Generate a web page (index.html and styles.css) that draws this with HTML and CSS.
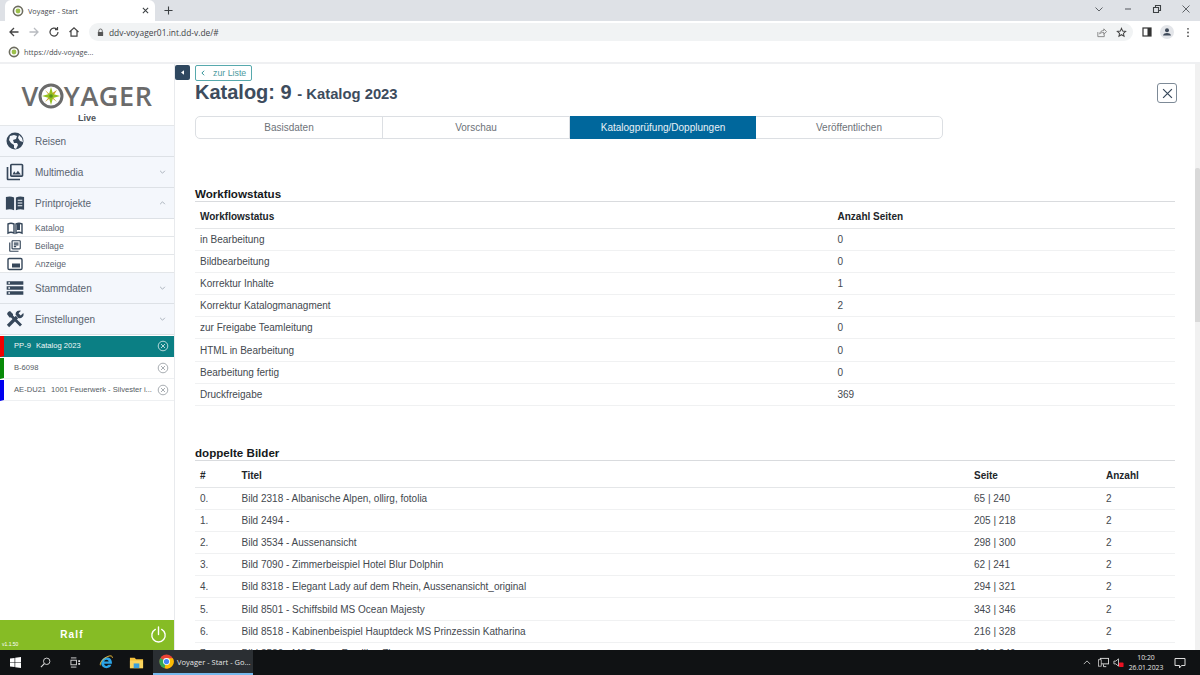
FILE: index.html
```html
<!DOCTYPE html>
<html lang="de">
<head>
<meta charset="utf-8">
<title>Voyager - Start</title>
<link rel="stylesheet" href="styles.css">
</head>
<body>
<header class="chrome">
  <div class="tabstrip">
    <div class="tab">
      <svg class="fav" viewBox="0 0 12 12"><circle cx="6" cy="6" r="4.6" fill="#fff" stroke="#6d6d5f" stroke-width="1.6"/><circle cx="6" cy="6" r="2.4" fill="#9cc04a"/></svg>
      <span class="tab-title">Voyager - Start</span>
      <svg class="tab-x" viewBox="0 0 8 8"><path d="M1 1l6 6M7 1L1 7" stroke="#3c4043" stroke-width="1.2"/></svg>
    </div>
    <svg class="tab-new" viewBox="0 0 10 10"><path d="M5 .5v9M.5 5h9" stroke="#3c4043" stroke-width="1.2"/></svg>
    <div class="win-ctrls">
      <svg viewBox="0 0 10 10"><path d="M1.5 3.5L5 7l3.500-3.500" fill="none" stroke="#5f6368"/></svg>
      <svg viewBox="0 0 10 10"><path d="M2 5h6" stroke="#5f6368" stroke-width="1.1"/></svg>
      <svg viewBox="0 0 10 10"><path d="M1.5 3.5h5v5h-5zM3.500 3.500v-2h5v5h-2" fill="none" stroke="#3c4043" stroke-width="1.1"/></svg>
      <svg viewBox="0 0 10 10"><path d="M1.5 1.5l7 7M8.5 1.5l-7 7" stroke="#5f6368" stroke-width="1"/></svg>
    </div>
  </div>
  <div class="toolbar">
    <svg class="nav" viewBox="0 0 12 12"><path d="M10.5 6H2M6 2L2 6l4 4" fill="none" stroke="#444" stroke-width="1.3"/></svg>
    <svg class="nav" viewBox="0 0 12 12"><path d="M1.5 6H10M6 2l4 4-4 4" fill="none" stroke="#b8bbc0" stroke-width="1.3"/></svg>
    <svg class="nav" viewBox="0 0 12 12"><path d="M10 6a4 4 0 1 1-1.2-2.8M9.5 1v2.6H7" fill="none" stroke="#444" stroke-width="1.2"/></svg>
    <svg class="nav" viewBox="0 0 12 12"><path d="M1.5 6L6 1.8 10.5 6M3 5v5.2h6V5" fill="none" stroke="#444" stroke-width="1.2"/></svg>
    <div class="omnibox">
      <svg class="lock" viewBox="0 0 8 10"><path d="M2 4.5V3a2 2 0 0 1 4 0v1.500" fill="none" stroke="#555"/><rect x="1" y="4.500" width="6" height="4.500" rx=".6" fill="#555"/></svg>
      <span class="url">ddv-voyager01.int.dd-v.de/#</span>
      <svg class="omni-ic" viewBox="0 0 12 12"><path d="M2 5.500v5h7V8M4 7.500c.4-2.500 2-3.600 4.500-3.600V2l3 3-3 3V6C6.500 6 5 6.300 4 7.500z" fill="none" stroke="#777" stroke-width=".9"/></svg>
      <svg class="omni-ic" viewBox="0 0 12 12"><path d="M6 1.500l1.300 3 3.200.3-2.400 2.100.7 3.200L6 8.400l-2.800 1.700.7-3.200L1.500 4.800l3.200-.3z" fill="none" stroke="#444" stroke-width="1.100"/></svg>
    </div>
    <svg class="side-ic" viewBox="0 0 10 10"><rect x="1" y="1" width="8" height="8" fill="#fff" stroke="#333" stroke-width="1.2"/><rect x="5.500" y="1" width="3.500" height="8" fill="#333"/></svg>
    <svg class="profile" viewBox="0 0 14 14"><circle cx="7" cy="7" r="7" fill="#e3e5e9"/><circle cx="7" cy="5.200" r="2" fill="#3f4a5a"/><path d="M3 10.500c.5-2 2.200-2.600 4-2.600s3.500.6 4 2.600z" fill="#3f4a5a"/></svg>
    <svg class="dots" viewBox="0 0 4 12"><circle cx="2" cy="2" r="1" fill="#555"/><circle cx="2" cy="6" r="1" fill="#555"/><circle cx="2" cy="10" r="1" fill="#555"/></svg>
  </div>
  <div class="bookmarks">
    <svg class="fav" viewBox="0 0 12 12"><circle cx="6" cy="6" r="4.600" fill="#fff" stroke="#6d6d5f" stroke-width="1.600"/><circle cx="6" cy="6" r="2.400" fill="#9cc04a"/></svg>
    <span class="bm-title">https://ddv-voyage...</span>
  </div>
</header>

<div class="app">
  <aside class="sidebar">
    <div class="brand">
      <div class="logo">
        <span>V</span>
        <svg class="compass" viewBox="0 0 26 26">
          <circle cx="13" cy="13" r="11" fill="#fff" stroke="#6b6b6b" stroke-width="3"/>
          <path d="M7 7l5 4.500 7-4.500-4.500 7 4.500 5-6-4.500L7 19l4.500-6z" fill="#c9a227"/>
          <path d="M13 4l2 7 7 2-7 2-2 7-2-7-7-2 7-2z" fill="#95c11f"/>
          <circle cx="13" cy="13" r="1.800" fill="#5a8f1e"/>
        </svg>
        <span>YAGER</span>
      </div>
      <div class="brand-sub">Live</div>
    </div>
    <nav>
      <a class="menu">
        <svg class="m-ic" viewBox="0 0 20 20"><circle cx="10" cy="10" r="8.500" fill="#36475a"/><path d="M5 5l4-1 3 1-1 3-3 1 1 3 3 0 1 2-2 4-2-1 0-3-3-2-2-3zM14 4l3 3 1 4-3-1-2-3z" fill="#f4f7fc"/></svg>
        <span class="m-label">Reisen</span>
      </a>
      <a class="menu">
        <svg class="m-ic" viewBox="0 0 24 24"><path d="M22 16V4c0-1.100-.9-2-2-2H8c-1.100 0-2 .9-2 2v12c0 1.100.9 2 2 2h12c1.100 0 2-.9 2-2zM20 16H8V4h12zM11 11l2 2.700 2.500-3.200L19 15H9zM2 6v14c0 1.100.9 2 2 2h14v-2H4V6H2z" fill="#36475a"/></svg>
        <span class="m-label">Multimedia</span>
        <svg class="caret" viewBox="0 0 8 5"><path d="M1 1l3 3 3-3" fill="none" stroke="#9aa3ad"/></svg>
      </a>
      <a class="menu">
        <svg class="m-ic" viewBox="0 0 22 20"><path d="M1 3.500c3-1 6-1 9 .5v14c-3-1.500-6-1.500-9-.5zM12 4c3-1.500 6-1.500 9-.5v14c-3-1-6-1-9 .5z" fill="#36475a"/><path d="M14 7h5M14 10h5M14 13h5" stroke="#f4f7fc" stroke-width="1.200"/></svg>
        <span class="m-label">Printprojekte</span>
        <svg class="caret" viewBox="0 0 8 5"><path d="M1 4l3-3 3 3" fill="none" stroke="#9aa3ad"/></svg>
      </a>
      <a class="sub">
        <svg class="s-ic" viewBox="0 0 16 14"><path d="M1 3c2-1 4-1 6 0v9c-2-1-4-1-6 0zM9 3c2-1 4-1 6 0v9c-2-1-4-1-6 0z" fill="none" stroke="#36475a" stroke-width="1.400"/><path d="M10 2h3v7h-3z" fill="#36475a"/></svg>
        <span>Katalog</span>
      </a>
      <a class="sub">
        <svg class="s-ic" viewBox="0 0 24 24"><path d="M4 6H2v14c0 1.100.9 2 2 2h14v-2H4V6zm16-4H8c-1.100 0-2 .9-2 2v12c0 1.100.9 2 2 2h12c1.100 0 2-.9 2-2V4c0-1.100-.9-2-2-2zm0 14H8V4h12v12zM10 9h8v2h-8zm0 3h4v2h-4zm0-6h8v2h-8z" fill="#36475a"/></svg>
        <span>Beilage</span>
      </a>
      <a class="sub">
        <svg class="s-ic" viewBox="0 0 16 14"><rect x="1" y="1.500" width="14" height="11" rx="1.200" fill="none" stroke="#36475a" stroke-width="1.400"/><rect x="5" y="6.500" width="8" height="4" fill="#36475a"/></svg>
        <span>Anzeige</span>
      </a>
      <a class="menu">
        <svg class="m-ic" viewBox="0 0 24 24"><path d="M2 20h20v-4H2v4zm2-3h2v2H4v-2zM2 4v4h20V4H2zm4 3H4V5h2v2zm-4 7h20v-4H2v4zm2-3h2v2H4v-2z" fill="#36475a"/></svg>
        <span class="m-label">Stammdaten</span>
        <svg class="caret" viewBox="0 0 8 5"><path d="M1 1l3 3 3-3" fill="none" stroke="#9aa3ad"/></svg>
      </a>
      <a class="menu">
        <svg class="m-ic" viewBox="0 0 20 20"><path d="M3 17L12 8" stroke="#36475a" stroke-width="3.200"/><path d="M10.500 5.500a4 4 0 0 1 5.500-3.800L13.500 4.200l2.200 2.200 2.600-2.500a4 4 0 0 1-5 5.200z" fill="#36475a"/><path d="M3 3l2-1 3 3 0 1.500 9 9-2 2-9-9H4.500L2 5z" fill="#36475a"/></svg>
        <span class="m-label">Einstellungen</span>
        <svg class="caret" viewBox="0 0 8 5"><path d="M1 1l3 3 3-3" fill="none" stroke="#9aa3ad"/></svg>
      </a>
    </nav>
    <div class="open-list">
      <div class="open-item active red">
        <span class="oi-id">PP-9</span><span class="oi-name">Katalog 2023</span>
        <svg class="oi-x" viewBox="0 0 12 12"><circle cx="6" cy="6" r="4.800" fill="none" stroke="currentColor"/><path d="M4 4l4 4M8 4l-4 4" stroke="currentColor"/></svg>
      </div>
      <div class="open-item green">
        <span class="oi-id">B-6098</span><span class="oi-name"></span>
        <svg class="oi-x" viewBox="0 0 12 12"><circle cx="6" cy="6" r="4.800" fill="none" stroke="currentColor"/><path d="M4 4l4 4M8 4l-4 4" stroke="currentColor"/></svg>
      </div>
      <div class="open-item blue">
        <span class="oi-id">AE-DU21</span><span class="oi-name">1001 Feuerwerk - Silvester i...</span>
        <svg class="oi-x" viewBox="0 0 12 12"><circle cx="6" cy="6" r="4.800" fill="none" stroke="currentColor"/><path d="M4 4l4 4M8 4l-4 4" stroke="currentColor"/></svg>
      </div>
    </div>
    <div class="user-bar">
      <span class="version">v1.1.50</span>
      <span class="user-name">Ralf</span>
      <svg class="power" viewBox="0 0 16 16"><path d="M5 3.200a6.300 6.300 0 1 0 6 0M8 1v7" fill="none" stroke="#fff" stroke-width="1.300" stroke-linecap="round"/></svg>
    </div>
  </aside>

  <main class="main">
    <button class="collapse" type="button"><svg viewBox="0 0 4 6"><path d="M4 0v6L0 3z" fill="#fff"/></svg></button>
    <button class="close" type="button"><svg viewBox="0 0 10 10"><path d="M1 1l8 8M9 1l-8 8" stroke="#36475a" stroke-width="1.100"/></svg></button>
    <div class="content">
      <a class="back"><svg viewBox="0 0 5 8"><path d="M4 1L1 4l3 3" fill="none" stroke="#17858b" stroke-width="1.200"/></svg><span>zur Liste</span></a>
      <h1 class="title">Katalog: 9 <small>- Katalog 2023</small></h1>
      <div class="tabs">
        <a class="tabs-item">Basisdaten</a>
        <a class="tabs-item">Vorschau</a>
        <a class="tabs-item selected">Katalogprüfung/Dopplungen</a>
        <a class="tabs-item">Veröffentlichen</a>
      </div>
      <section class="block first">
        <h2 class="block-title">Workflowstatus</h2>
        <table class="grid wf">
          <thead><tr><th>Workflowstatus</th><th>Anzahl Seiten</th></tr></thead>
          <tbody>
            <tr><td>in Bearbeitung</td><td>0</td></tr>
            <tr><td>Bildbearbeitung</td><td>0</td></tr>
            <tr><td>Korrektur Inhalte</td><td>1</td></tr>
            <tr><td>Korrektur Katalogmanagment</td><td>2</td></tr>
            <tr><td>zur Freigabe Teamleitung</td><td>0</td></tr>
            <tr><td>HTML in Bearbeitung</td><td>0</td></tr>
            <tr><td>Bearbeitung fertig</td><td>0</td></tr>
            <tr><td>Druckfreigabe</td><td>369</td></tr>
          </tbody>
        </table>
      </section>
      <section class="block second">
        <h2 class="block-title">doppelte Bilder</h2>
        <table class="grid dup">
          <thead><tr><th>#</th><th>Titel</th><th>Seite</th><th>Anzahl</th></tr></thead>
          <tbody>
            <tr><td>0.</td><td>Bild 2318 - Albanische Alpen, ollirg, fotolia</td><td>65 | 240</td><td>2</td></tr>
            <tr><td>1.</td><td>Bild 2494 -</td><td>205 | 218</td><td>2</td></tr>
            <tr><td>2.</td><td>Bild 3534 - Aussenansicht</td><td>298 | 300</td><td>2</td></tr>
            <tr><td>3.</td><td>Bild 7090 - Zimmerbeispiel Hotel Blur Dolphin</td><td>62 | 241</td><td>2</td></tr>
            <tr><td>4.</td><td>Bild 8318 - Elegant Lady auf dem Rhein, Aussenansicht_original</td><td>294 | 321</td><td>2</td></tr>
            <tr><td>5.</td><td>Bild 8501 - Schiffsbild MS Ocean Majesty</td><td>343 | 346</td><td>2</td></tr>
            <tr><td>6.</td><td>Bild 8518 - Kabinenbeispiel Hauptdeck MS Prinzessin Katharina</td><td>216 | 328</td><td>2</td></tr>
            <tr><td>7.</td><td>Bild 8530 - MS Bonne Familien Zimmer</td><td>221 | 249</td><td>2</td></tr>
          </tbody>
        </table>
      </section>
    </div>
    <div class="scrollbar"><div class="thumb"></div></div>
  </main>
</div>

<footer class="taskbar">
  <svg class="tb-win" viewBox="0 0 12 12"><path d="M0 1.700l5-.7v4.600H0zM5.700.9L12 0v5.600H5.700zM0 6.300h5V11l-5-.7zM5.700 6.300H12V12l-6.300-.9z" fill="#fff"/></svg>
  <svg class="tb-ic" viewBox="0 0 12 12"><circle cx="7.300" cy="4.700" r="3.500" fill="none" stroke="#ddd" stroke-width="1"/><path d="M4.700 7.300L1 11" stroke="#ddd" stroke-width="1.200"/></svg>
  <svg class="tb-ic" viewBox="0 0 12 12"><path d="M1 1h6M1 11h6" stroke="#ddd"/><rect x="1" y="3.500" width="6" height="5" fill="none" stroke="#ddd"/><rect x="9" y="3.500" width="2" height="2" fill="#ddd"/><rect x="9" y="6.500" width="2" height="2" fill="#ddd"/></svg>
  <svg class="tb-app" viewBox="0 0 16 16"><path d="M8 2.500a5.700 5.700 0 0 0-5.700 6c0 3.300 2.600 5.500 5.700 5.500 2.500 0 4.400-1.300 5.200-3.500H10c-.5.800-1.200 1.100-2 1.100-1.400 0-2.500-1-2.500-2.300h8.300c.4-3.800-2-6.800-5.800-6.800zM5.600 7c.2-1.100 1.200-1.900 2.400-1.900s2.100.8 2.300 1.900z" fill="#2ba4e6"/><path d="M1.500 11c-1-2.800 3-7.500 8-9.500 3-1.200 5-.5 4.800 1.500" fill="none" stroke="#f3c23c" stroke-width="1"/></svg>
  <svg class="tb-app" viewBox="0 0 16 16"><path d="M1 3h5l1.500 1.500H15V14H1z" fill="#f6c33c"/><rect x="1" y="6" width="14" height="8" fill="#fbd55e"/><rect x="5" y="9" width="6" height="5" fill="#3aa0dc"/></svg>
  <div class="tb-active">
    <svg class="tb-chrome" viewBox="0 0 16 16"><circle cx="8" cy="8" r="7.500" fill="#e94335"/><path d="M8 8L1.500 4.200A7.500 7.500 0 0 0 6 15.300z" fill="#34a853"/><path d="M8 4.500h6.800A7.500 7.500 0 0 1 6 15.300z" fill="#fbbc05"/><circle cx="8" cy="8" r="3.700" fill="#fff"/><circle cx="8" cy="8" r="2.800" fill="#4285f4"/></svg>
    <span>Voyager - Start - Go...</span>
  </div>
  <div class="tray">
    <svg class="tr-up" viewBox="0 0 10 6"><path d="M1 5l4-4 4 4" fill="none" stroke="#ddd"/></svg>
    <svg class="tr-net" viewBox="0 0 12 12"><rect x="2.500" y="1.500" width="9" height="6" fill="none" stroke="#ddd"/><rect x=".5" y="3" width="3" height="7" fill="#111" stroke="#ddd" stroke-width=".8"/><path d="M6 8v2.500h3" stroke="#ddd" fill="none"/></svg>
    <svg class="tr-vol" viewBox="0 0 12 12"><path d="M1 4.500h2L6 2v8L3 7.500H1z" fill="none" stroke="#ddd" stroke-width=".9"/><rect x="6.500" y="6" width="5" height="5" rx="1" fill="#e81123"/></svg>
    <div class="clock"><span>10:20</span><span>26.01.2023</span></div>
    <svg class="tr-msg" viewBox="0 0 12 12"><path d="M1 1.500h10v7H7.500L5.500 11V8.500H1z" fill="none" stroke="#ddd"/></svg>
  </div>
</footer>
</body>
</html>
```
FILE: styles.css
```css
* { box-sizing: border-box; }
html, body { margin: 0; height: 100%; }
body {
  width: 1200px;
  height: 675px;
  overflow: hidden;
  display: flex;
  flex-direction: column;
  font-family: "Liberation Sans", Arial, sans-serif;
  font-size: 10px;
  color: #44494f;
  background: #fff;
}
svg { display: block; flex: none; }

/* Browser chrome */
.chrome { flex: none; border-bottom: 2px solid #eff0f2; font-family: "Open Sans", "Noto Sans", sans-serif; }
.tabstrip { height: 21px; background: #dee1e6; display: flex; align-items: flex-end; padding-left: 5px; }
.tab {
  width: 150px; height: 21px; background: #fff; border-radius: 6px 6px 0 0;
  display: flex; align-items: center; padding: 0 5px 0 7px;
}
.fav { width: 12px; height: 12px; }
.tab-title { margin-left: 4px; flex: 1; font-size: 7.3px; color: #45494e; white-space: nowrap; }
.tab-x { width: 7px; height: 7px; margin-right: 1px; }
.tab-new { width: 9px; height: 9px; margin: 0 0 6px 9px; }
.win-ctrls { margin-left: auto; height: 21px; display: flex; align-items: flex-start; padding: 4px 9px 0 0; gap: 19px; }
.win-ctrls svg { width: 10px; height: 10px; }
.toolbar { height: 22px; display: flex; align-items: center; padding: 0 9px 0 8px; background: #fff; }
.nav { width: 12px; height: 12px; margin-right: 8px; }
.omnibox {
  margin-left: 1px; width: 1044px; height: 18px; border-radius: 9px; background: #f1f3f4;
  display: flex; align-items: center; padding: 0 6px 0 8px;
}
.lock { width: 7px; height: 9px; }
.url { margin-left: 5px; flex: 1; font-size: 8.4px; color: #3f4347; }
.omni-ic { width: 11px; height: 11px; margin-left: 9px; }
.side-ic { width: 10px; height: 10px; margin-left: 9px; }
.profile { width: 14px; height: 14px; margin-left: 8px; }
.dots { width: 4px; height: 11px; margin-left: 12px; }
.bookmarks { height: 19px; display: flex; align-items: center; padding: 0 0 1px 8px; background: #fff; }
.bm-title { margin-left: 4px; font-size: 7.3px; color: #4b4f54; }

/* App frame */
.app { flex: 1; min-height: 0; display: flex; }
.sidebar { width: 175px; flex: none; display: flex; flex-direction: column; border-right: 1px solid #e8eaed; background: #fff; }
.brand { height: 62px; flex: none; padding-top: 18px; border-bottom: 1px solid #e4e7ea; }
.logo {
  display: flex; justify-content: center; align-items: center; height: 27px;
  font-family: "Open Sans", sans-serif; font-size: 27px; font-weight: 600; color: #6b6b6b; line-height: 27px; letter-spacing: .6px;
}
.compass { width: 26px; height: 26px; margin: 0 0 0 -1px; }
.brand-sub { margin-top: 4px; text-align: center; font-size: 9px; font-weight: bold; color: #4d5359; line-height: 11px; }
.menu {
  display: flex; align-items: center; height: 31px; background: #f4f7fc; border-bottom: 1px solid #dde1e6;
  padding: 0 8px 0 5px; font-size: 10px; color: #5a6470;
}
.m-ic { width: 20px; height: 20px; }
.m-label { margin-left: 10px; flex: 1; }
.caret { width: 7px; height: 4px; }
.sub {
  display: flex; align-items: center; height: 18px; background: #fff; border-bottom: 1px solid #e3e6e9;
  padding-left: 7px; font-size: 8.6px; color: #5a6470;
}
.s-ic { width: 16px; height: 14px; }
.sub span { margin-left: 12px; }
.open-list { margin-top: 1px; }
.open-item {
  height: 21px; margin-bottom: 1px; display: flex; align-items: center; padding: 0 5px 1px 10px;
  font-size: 7.6px; color: #555c63; border-left: 4px solid; background: #fff; border-bottom: 1px solid #eef0f2;
}
.open-item.red { border-left-color: #f00000; }
.open-item.green { border-left-color: #078a07; }
.open-item.blue { border-left-color: #0000f0; }
.open-item.active { background: #0b7f84; color: #f0f8f8; border-bottom-color: #0b7f84; }
.oi-id { margin-right: 5px; }
.oi-name { flex: 1; min-width: 0; white-space: nowrap; overflow: hidden; }
.oi-x { width: 12px; height: 12px; color: #a8adb2; }
.active .oi-x { color: #b7d9db; }
.user-bar {
  margin-top: auto; height: 30px; background: #86bc25; display: flex; align-items: center; justify-content: center;
  position: relative; color: #fff; padding: 0 30px 2px 0;
}
.user-name { font-size: 10px; font-weight: bold; letter-spacing: 1.2px; }
.version { position: absolute; left: 2px; bottom: 3px; font-size: 5px; }
.power { position: absolute; right: 7px; top: 6px; width: 17px; height: 17px; }

/* Main area */
.main { flex: 1; min-width: 0; display: flex; position: relative; overflow: hidden; }
.content { flex: 1; min-width: 0; padding: 1px 20px 0 20px; }
.collapse {
  position: absolute; left: 0; top: 1px; width: 15px; height: 15px; border: 0; padding: 0; border-radius: 2px;
  background: #2f4860; display: flex; align-items: center; justify-content: center;
}
.collapse svg { width: 3px; height: 5px; }
.close {
  position: absolute; left: 982px; top: 19px; width: 20px; height: 20px; padding: 0; background: #fff;
  border: 1px solid #7d8a97; border-radius: 3px; display: flex; align-items: center; justify-content: center;
}
.close svg { width: 11px; height: 11px; }
.back {
  width: 57px; height: 16px; border: 1px solid #57a9ad; border-radius: 2px; display: flex; align-items: center;
  padding-left: 5px; color: #4c9aa0; font-size: 8.8px;
}
.back svg { width: 4px; height: 6px; }
.back span { margin-left: 8px; }
.title { margin: 0; height: 23px; font-size: 20px; line-height: 23px; font-weight: bold; color: #3d4c5d; }
.title small { font-size: 14.8px; font-weight: bold; }
.tabs {
  margin-top: 12px; width: 748px; height: 23px; display: flex; border: 1px solid #dcdfe3; border-radius: 5px;
}
.tabs-item {
  flex: 1; display: flex; align-items: center; justify-content: center; font-size: 10px; color: #6d7278;
  border-right: 1px solid #dcdfe3;
}
.tabs-item:last-child { border-right: 0; }
.tabs-item.selected { background: #00679c; color: #e8f1f6; margin: -1px 0; border-right: 0; }
.block-title {
  margin: 0; height: 15px; font-size: 11.6px; line-height: 14px; font-weight: bold; color: #15181b;
  border-bottom: 1px solid #d9dbde;
}
.block.first { margin-top: 48px; }
.block.second { margin-top: 40px; }
.grid { width: 100%; border-collapse: collapse; table-layout: fixed; font-size: 10px; color: #44494f; }
.grid th { height: 26px; padding: 4px 5px 0; text-align: left; font-weight: bold; color: #212529; border-bottom: 1px solid #e4e6e8; }
.grid td { height: 22.2px; padding: 0 5px; border-bottom: 1px solid #f0f1f2; white-space: nowrap; }
.wf th:first-child { width: 637.5px; }
.dup th:nth-child(1) { width: 41.5px; }
.dup th:nth-child(3) { width: 132px; }
.dup th:nth-child(4) { width: 74px; }
.scrollbar { width: 5px; flex: none; background: #f1f1f1; padding-top: 104px; }
.thumb { height: 154px; background: #d9d9d9; border-radius: 2px 2px 0 0; }

/* Taskbar */
.taskbar {
  flex: none; height: 25px; background: #101214; display: flex; align-items: center; color: #e5e5e5;
  font-family: "Open Sans", "Noto Sans", sans-serif; padding-left: 10px;
}
.tb-win { width: 11px; height: 11px; }
.tb-ic { width: 11px; height: 11px; margin-left: 19px; }
.tb-app { width: 15px; height: 15px; margin-left: 18px; }
.tb-app + .tb-app { margin-left: 15px; }
.tb-active {
  margin-left: 9px; width: 100px; height: 25px; background: #2b2f33; border-bottom: 2px solid #76b9ed;
  display: flex; align-items: center; padding-left: 6px; font-size: 7.5px; white-space: nowrap;
}
.tb-chrome { width: 15px; height: 15px; margin-right: 3px; }
.tray { margin-left: auto; display: flex; align-items: center; height: 25px; }
.tr-up { width: 8px; height: 5px; }
.tr-net { width: 11px; height: 11px; margin-left: 7px; }
.tr-vol { width: 11px; height: 11px; margin-left: 4px; }
.clock { margin-left: 3px; width: 38px; display: flex; flex-direction: column; align-items: center; font-size: 6.8px; line-height: 10px; }
.tr-msg { width: 12px; height: 12px; margin: 0 14px 0 9px; }
```
